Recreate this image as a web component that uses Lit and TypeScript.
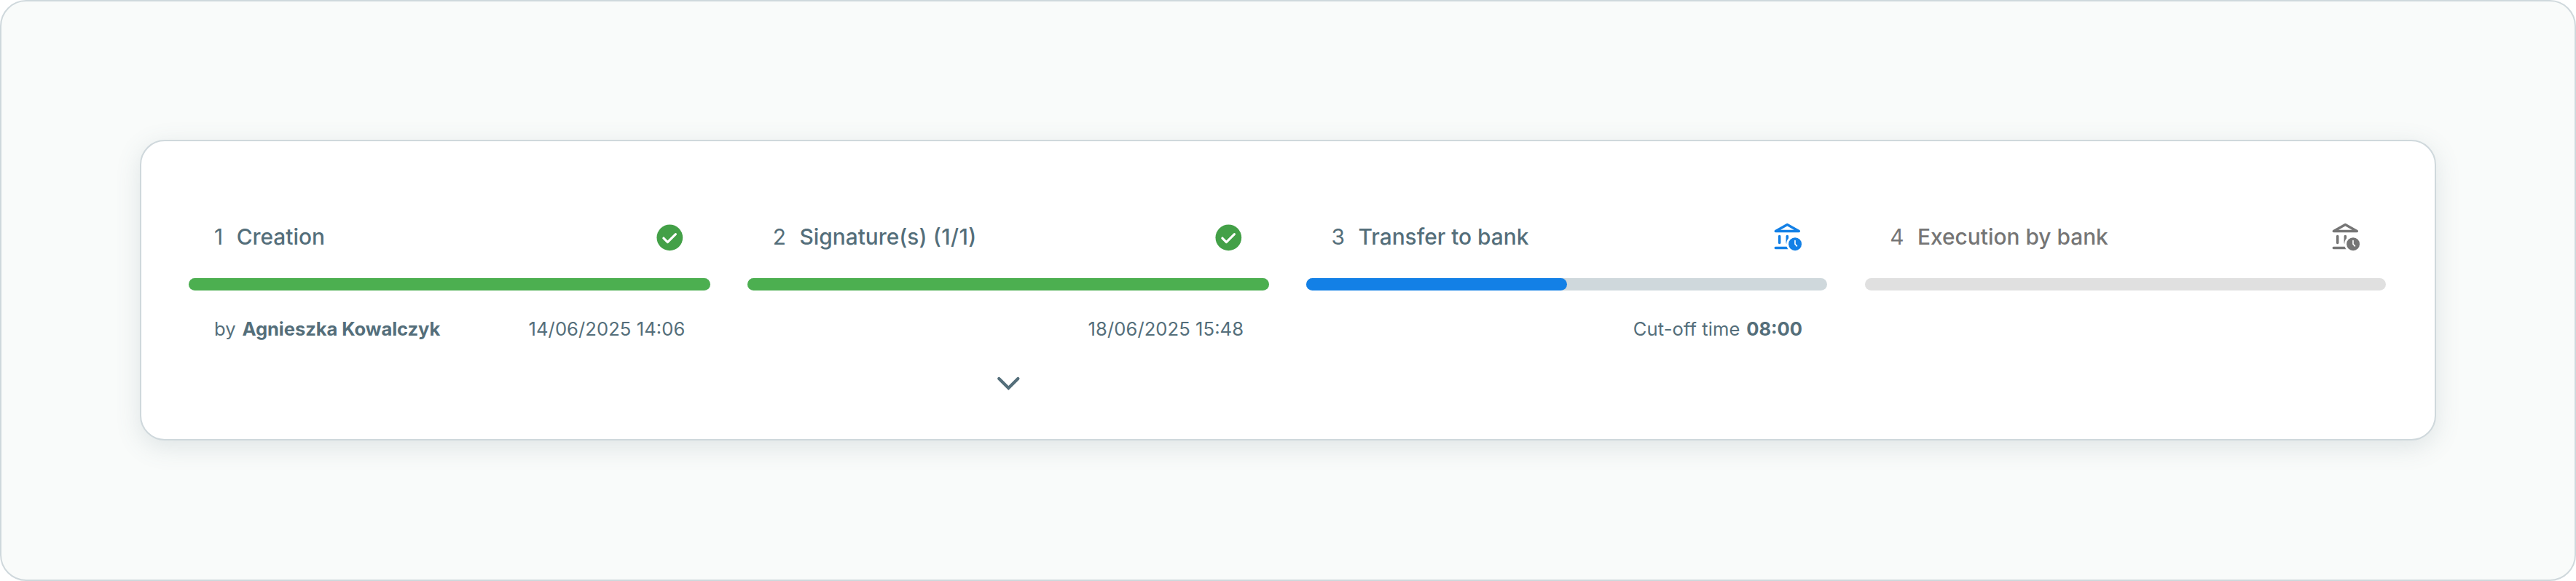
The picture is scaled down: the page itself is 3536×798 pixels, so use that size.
import { LitElement, html, svg, css, nothing } from 'lit';
import { customElement, property } from 'lit/decorators.js';
import { classMap } from 'lit/directives/class-map.js';

type StepState = 'done' | 'active' | 'pending';
type IconName = 'check' | 'bank-clock' | 'chevron';

interface Step {
  label: string;
  count?: string;
  state: StepState;
  icon: IconName;
  progress: number;
  author?: string;
  date?: string;
  cutOff?: string;
  expandable?: boolean;
}

const STEPS: Step[] = [
  { label: 'Creation', state: 'done', icon: 'check', progress: 100, author: 'Agnieszka Kowalczyk', date: '14/06/2025 14:06' },
  { label: 'Signature(s)', count: '(1/1)', state: 'done', icon: 'check', progress: 100, date: '18/06/2025 15:48', expandable: true },
  { label: 'Transfer to bank', state: 'active', icon: 'bank-clock', progress: 50, cutOff: '08:00' },
  { label: 'Execution by bank', state: 'pending', icon: 'bank-clock', progress: 0 },
];

const GLYPHS = {
  check: svg`
    <circle cx="12" cy="12" r="10.05" fill="currentColor" />
    <path d="M7.25 12.4 10.35 15.5 16.55 9.4" fill="none" stroke="#fff" stroke-width="1.8"
      stroke-linecap="round" stroke-linejoin="round" />`,
  'bank-clock': svg`
    <path d="M3 7 12 2 21 7Z" fill="none" stroke="currentColor" stroke-width="2" stroke-linejoin="round" />
    <path d="M6 11V16M12 11V16M3 20H14" fill="none" stroke="currentColor" stroke-width="2" stroke-linecap="round" />
    <circle cx="18.05" cy="17" r="6.7" fill="#fff" />
    <circle cx="18.05" cy="17" r="5.05" fill="currentColor" />
    <path d="M18 14.4V17L19.4 18.5" fill="none" stroke="#fff" stroke-width="0.9"
      stroke-linecap="round" stroke-linejoin="round" />`,
  chevron: svg`
    <path d="M4.65 8.4 12 15.7 19.35 8.4" fill="none" stroke="currentColor" stroke-width="2.4"
      stroke-linecap="round" />`,
};

@customElement('step-icon')
export class StepIcon extends LitElement {
  @property() name: IconName = 'check';

  static styles = css`
    :host { display: block; width: 42.67px; height: 42.67px; flex: none; }
    svg { display: block; width: 100%; height: 100%; }
  `;

  render() {
    return html`<svg viewBox="0 0 24 24" aria-hidden="true">${GLYPHS[this.name]}</svg>`;
  }
}

@customElement('process-step')
export class ProcessStep extends LitElement {
  @property({ attribute: false }) step!: Step;
  @property({ type: Number }) position = 1;

  static styles = css`
    :host { display: block; min-width: 0; }
    .step { display: flex; flex-direction: column; color: #546e7a; font-feature-settings: "calt" 1; }
    .header { display: flex; align-items: center; height: 42.67px; padding: 0 34.13px; }
    .title { display: flex; flex: 1; gap: 18.6px; padding: 0 0 2px 0.4px; font-size: 29.87px; line-height: 40px; white-space: pre; }
    .label { font-weight: 500; }
    .count { margin-left: 0.4px; letter-spacing: 0.4px; }
    .track { height: 17.07px; margin-top: 34.7px; border-radius: 9px; background: #cfd8dc; }
    .fill { height: 100%; border-radius: inherit; }
    .details { display: flex; justify-content: space-between; height: 38.4px; margin-top: 33.4px; padding: 0 34.6px;
      font-size: 25.6px; line-height: 38.4px; letter-spacing: 0.06px; white-space: nowrap; }
    .pair { display: flex; gap: 8.8px; }
    .end { margin-left: auto; }
    strong { font-weight: 700; letter-spacing: -0.08px; }
    .toggle { display: flex; justify-content: center; margin-top: 34.1px; }
    .done .status { color: #43a047; }
    .done .fill { background: #4caf50; }
    .active .status { color: #1380e6; }
    .active .fill { background: #1380e6; }
    .pending { color: #757575; }
    .pending .track { background: #e0e0e0; }
  `;

  render() {
    const { label, count, state, icon, progress, author, date, cutOff, expandable } = this.step;
    return html`
      <section class=${classMap({ step: true, [state]: true })}>
        <div class="header">
          <div class="title"><span>${this.position}</span><span class="label">${label}${count ? html` <span class="count">${count}</span>` : nothing}</span></div>
          <step-icon class="status" name=${icon}></step-icon>
        </div>
        <div class="track"><div class="fill" style="width:${progress}%"></div></div>
        <div class="details">
          ${author ? html`<div class="pair"><span>by</span><strong>${author}</strong></div>` : nothing}
          ${date ? html`<span class="end">${date}</span>` : nothing}
          ${cutOff ? html`<div class="pair end"><span>Cut-off time</span><strong>${cutOff}</strong></div>` : nothing}
        </div>
        ${expandable ? html`<div class="toggle"><step-icon name="chevron"></step-icon></div>` : nothing}
      </section>
    `;
  }
}

@customElement('app-root')
export class AppRoot extends LitElement {
  static styles = css`
    :host { display: block; height: 100vh; background: #fff; font-family: Inter, "Liberation Sans", sans-serif; }
    .frame { box-sizing: border-box; height: 797.5px; padding: 190px; border: 2px solid #cfd8dc;
      border-radius: 36px; background: #f9fbfa; }
    .card { box-sizing: border-box; display: grid; grid-template-columns: repeat(4, 1fr); column-gap: 51.2px;
      height: 413px; padding: 110.9px 66.8px 0 65.4px; border: 2px solid #cfd8dc; border-radius: 34.13px;
      background: #fff; box-shadow: 0 8.53px 34.13px rgba(84, 110, 122, 0.16); }
  `;

  render() {
    return html`
      <main class="frame">
        <div class="card">
          ${STEPS.map((step, i) => html`<process-step .step=${step} position=${i + 1}></process-step>`)}
        </div>
      </main>
    `;
  }
}
